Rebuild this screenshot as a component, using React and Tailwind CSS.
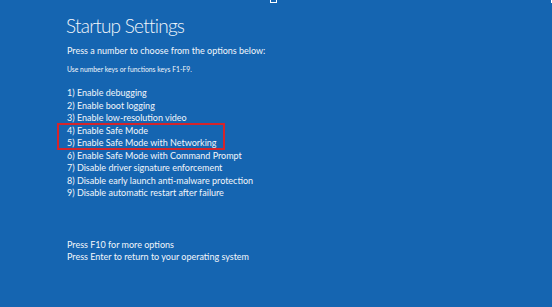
const options = [
  "1) Enable debugging",
  "2) Enable boot logging",
  "3) Enable low-resolution video",
  "4) Enable Safe Mode",
  "5) Enable Safe Mode with Networking",
  "6) Enable Safe Mode with Command Prompt",
  "7) Disable driver signature enforcement",
  "8) Disable early launch anti-malware protection",
  "9) Disable automatic restart after failure",
];

const App = () => {
  return (
    <div
      className="relative w-[552px] h-[307px] overflow-hidden bg-[#1565b1] text-[#f2f6fb] pl-[67px]"
      style={{ fontFamily: 'Lato, "Noto Sans", sans-serif' }}
    >
      {/* bits of window chrome cut off at the top */}
      <div className="absolute left-[270px] -top-[4px] w-[7px] h-[7px] border border-white" />
      <div className="absolute right-0 top-0 w-[1px] h-[3px] bg-white" />

      <h1 className="pt-[14px] -ml-[1px] text-[19px] leading-[24px] font-light tracking-[-0.75px]">
        Startup Settings
      </h1>
      <p className="mt-[7px] text-[9px] leading-[12px]">
        Press a number to choose from the options below:
      </p>
      <p className="mt-[6px] text-[6.8px] leading-[12px]">
        Use number keys or functions keys F1-F9.
      </p>

      <div className="mt-[12px] text-[9px] leading-[12.5px]">
        {options.slice(0, 3).map((o) => (
          <p key={o}>{o}</p>
        ))}
        <div className="relative">
          {/* highlight box */}
          <div className="absolute -left-[10px] -top-[2px] w-[168px] h-[27px] border-2 border-solid border-[#d4242b]" />
          <p>{options[3]}</p>
          <p>{options[4]}</p>
        </div>
        {options.slice(5).map((o) => (
          <p key={o}>{o}</p>
        ))}
      </div>

      <div className="mt-[39px] text-[9px] leading-[12px]">
        <p>Press F10 for more options</p>
        <p>Press Enter to return to your operating system</p>
      </div>
    </div>
  );
};

export default App;
